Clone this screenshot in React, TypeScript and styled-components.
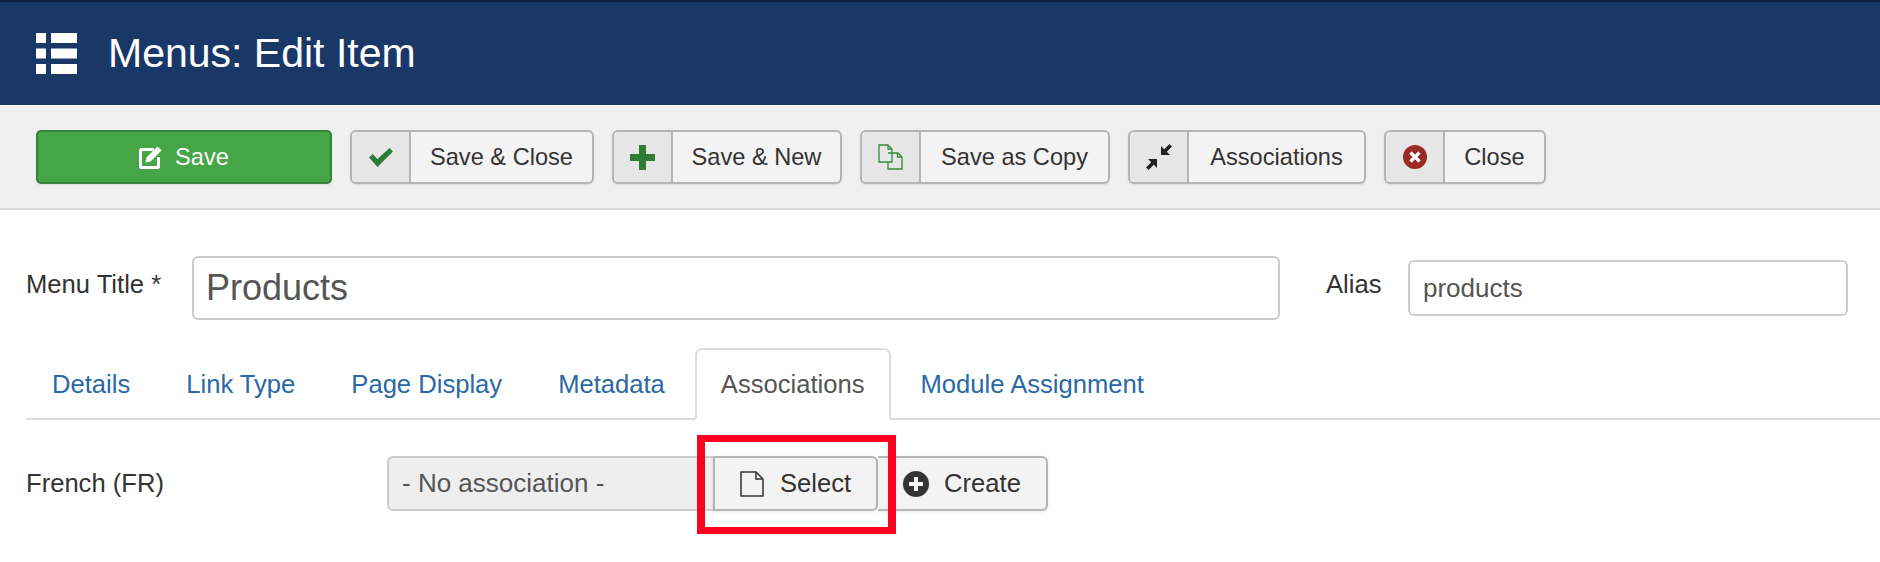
import React from "react";
import styled, { createGlobalStyle } from "styled-components";

const GlobalStyle = createGlobalStyle`
  html, body {
    margin: 0;
    padding: 0;
    background: #ffffff;
    font-family: "Liberation Sans", Arial, sans-serif;
    color: #333333;
  }
`;

const Page = styled.div`
  width: 1880px;
  height: 562px;
  overflow: hidden;
  position: relative;
  background: #fff;
`;

const Header = styled.header`
  height: 103px;
  box-sizing: content-box;
  background: #1a3867;
  border-top: 2px solid #0c1e3e;
  display: flex;
  align-items: center;
  padding-left: 36px;
  gap: 31px;
  color: #fff;
`;

const Title = styled.h1`
  margin: 0;
  font-size: 41px;
  font-weight: 400;
  line-height: 1;
`;

const Toolbar = styled.div`
  height: 102px;
  background: #f0f0f0;
  border-bottom: 2px solid #dddddd;
  display: flex;
  align-items: center;
  padding-left: 36px;
  gap: 18px;
  margin-top: 1px;
`;

const SaveButton = styled.div`
  width: 296px;
  height: 54px;
  box-sizing: border-box;
  background: #46a546;
  border: 2px solid #35843a;
  border-radius: 5px;
  box-shadow: 0 1px 2px rgba(0, 0, 0, 0.1);
  color: #fff;
  font-size: 23.6px;
  display: flex;
  align-items: center;
  justify-content: center;
  gap: 12px;
`;

const ToolButton = styled.div<{ $w: number }>`
  width: ${(p) => p.$w}px;
  height: 54px;
  box-sizing: border-box;
  background: #f3f3f3;
  border: 2px solid #b5b5b5;
  border-radius: 6px;
  box-shadow: 0 1px 2px rgba(0, 0, 0, 0.1);
  font-size: 23.6px;
  color: #333;
  display: flex;
  overflow: hidden;
`;

const IconCell = styled.span`
  width: 57px;
  flex: none;
  background: #e6e6e6;
  border-right: 2px solid #b5b5b5;
  display: flex;
  align-items: center;
  justify-content: center;
`;

const ToolLabel = styled.span`
  flex: 1;
  display: flex;
  align-items: center;
  justify-content: center;
`;

const Main = styled.main`
  padding-left: 26px;
`;

const TitleRow = styled.div`
  display: flex;
  align-items: flex-start;
  padding: 46px 32px 0 0;
`;

const FieldLabel = styled.label<{ $w: number }>`
  width: ${(p) => p.$w}px;
  flex: none;
  font-size: 25.6px;
  line-height: 30px;
  padding-top: 13px;
  color: #333;
`;

const TitleField = styled.div`
  width: 1088px;
  height: 64px;
  box-sizing: border-box;
  flex: none;
  border: 2px solid #cccccc;
  border-radius: 6px;
  padding-left: 12px;
  font-size: 36px;
  line-height: 60px;
  color: #555;
  margin-right: 46px;
`;

const AliasField = styled.div`
  width: 440px;
  height: 56px;
  box-sizing: border-box;
  flex: none;
  margin-top: 4px;
  border: 2px solid #cccccc;
  border-radius: 6px;
  padding-left: 13px;
  font-size: 26px;
  line-height: 52px;
  color: #555;
`;

const Tabs = styled.nav`
  display: flex;
  gap: 4px;
  margin-top: 28px;
  height: 72px;
  box-sizing: border-box;
  border-bottom: 2px solid #dddddd;
`;

const Tab = styled.a<{ $active?: boolean }>`
  height: 72px;
  box-sizing: border-box;
  padding: 0 24px;
  font-size: 25.6px;
  line-height: 68px;
  color: ${(p) => (p.$active ? "#555555" : "#2a69a6")};
  border: 2px solid ${(p) => (p.$active ? "#dddddd" : "transparent")};
  border-bottom-color: ${(p) => (p.$active ? "#ffffff" : "transparent")};
  border-radius: 7px 7px 0 0;
  background: ${(p) => (p.$active ? "#ffffff" : "transparent")};
`;

const AssocRow = styled.div`
  display: flex;
  align-items: center;
  margin-top: 36px;
`;

const AssocLabel = styled.label`
  width: 361px;
  flex: none;
  font-size: 25.6px;
  color: #333;
`;

const Group = styled.div`
  display: flex;
  height: 55px;
`;

const NoAssoc = styled.div`
  width: 326px;
  box-sizing: border-box;
  background: #eeeeee;
  border: 2px solid #cccccc;
  border-right: none;
  border-radius: 6px 0 0 6px;
  padding-left: 13px;
  font-size: 26px;
  line-height: 50px;
  color: #555;
`;

const GroupButton = styled.div<{ $w: number; $last?: boolean }>`
  width: ${(p) => p.$w}px;
  box-sizing: border-box;
  background: #f3f3f3;
  border: 2px solid #b5b5b5;
  border-left: ${(p) => (p.$last ? "none" : "2px solid #b5b5b5")};
  border-radius: ${(p) => (p.$last ? "0 6px 6px 0" : "0 6px 6px 0")};
  box-shadow: 0 1px 3px rgba(0, 0, 0, 0.1);
  font-size: 25.6px;
  color: #333;
  display: flex;
  align-items: center;
  justify-content: center;
  gap: ${(p) => (p.$last ? 15 : 16)}px;
`;

const Highlight = styled.div`
  position: absolute;
  left: 697px;
  top: 435px;
  width: 199px;
  height: 99px;
  box-sizing: border-box;
  border-style: solid;
  border-color: #ff0020;
  border-width: 7px 8px;
  pointer-events: none;
`;

const ListIcon = () => (
  <svg width="41" height="41" viewBox="0 0 41 41" fill="#fff">
    <rect x="0" y="0" width="10" height="10" />
    <rect x="15" y="0" width="26" height="10" />
    <rect x="0" y="15.500" width="10" height="10" />
    <rect x="15" y="15.500" width="26" height="10" />
    <rect x="0" y="31" width="10" height="10" />
    <rect x="15" y="31" width="26" height="10" />
  </svg>
);

const EditIcon = () => (
  <svg width="24" height="24" viewBox="0 0 24 24" fill="none">
    <path d="M15 4.500H2.500a1 1 0 0 0-1 1V21.500a1 1 0 0 0 1 1H18.500a1 1 0 0 0 1-1V12" stroke="#fff" strokeWidth="3" />
    <path d="M7.500 12.500 18.500 1.500l4 4L11.500 16.500l-5 1z" fill="#fff" />
  </svg>
);

const CheckIcon = () => (
  <svg width="24" height="19" viewBox="0 0 24 19">
    <path d="M0 9.500 3.500 6l5 5L20.500 0 24 3.500 8.500 19z" fill="#2f7d32" />
  </svg>
);

const PlusIcon = () => (
  <svg width="25" height="25" viewBox="0 0 25 25">
    <path d="M9 0h7v9h9v7h-9v9H9v-9H0V9h9z" fill="#2f7d32" />
  </svg>
);

const CopyIcon = () => (
  <svg width="25" height="26" viewBox="0 0 25 26" fill="none" stroke="#378a3c" strokeWidth="1.300">
    <path d="M1 1h9l4 4v13H1z" />
    <path d="M10 1v4h4" />
    <path d="M10 9h10l4 4v12H10v-7" />
    <path d="M19.500 9v4H24" />
  </svg>
);

const ContractIcon = () => (
  <svg width="26" height="26" viewBox="0 0 26 26" fill="#222">
    <path d="M15 2v9h9l-3.200-3.200L26 2.600 23.400 0l-5.200 5.200z" />
    <path d="M11 24v-9H2l3.200 3.200L0 23.400 2.600 26l5.200-5.200z" />
  </svg>
);

const CancelIcon = () => (
  <svg width="24" height="24" viewBox="0 0 24 24">
    <circle cx="12" cy="12" r="12" fill="#9c2a24" />
    <path d="M7.500 7.500l9 9M16.500 7.500l-9 9" stroke="#fff" strokeWidth="3.200" />
  </svg>
);

const FileIcon = () => (
  <svg width="24" height="26" viewBox="0 0 24 26" fill="none" stroke="#333" strokeWidth="1.500">
    <path d="M1 1h15l7 7v17H1z" />
    <path d="M16 1v7h7" />
  </svg>
);

const PlusCircleIcon = () => (
  <svg width="26" height="26" viewBox="0 0 26 26">
    <circle cx="13" cy="13" r="13" fill="#333" />
    <path d="M11 6h4v5h5v4h-5v5h-4v-5H6v-4h5z" fill="#f3f3f3" />
  </svg>
);

const tools = [
  { label: "Save & Close", w: 244, icon: <CheckIcon /> },
  { label: "Save & New", w: 230, icon: <PlusIcon /> },
  { label: "Save as Copy", w: 250, icon: <CopyIcon /> },
  { label: "Associations", w: 238, icon: <ContractIcon /> },
  { label: "Close", w: 162, icon: <CancelIcon /> },
];

const tabs = ["Details", "Link Type", "Page Display", "Metadata", "Associations", "Module Assignment"];

export default function App() {
  return (
    <Page>
      <GlobalStyle />
      <Header>
        <ListIcon />
        <Title>Menus: Edit Item</Title>
      </Header>
      <Toolbar>
        <SaveButton>
          <EditIcon />
          Save
        </SaveButton>
        {tools.map((t) => (
          <ToolButton key={t.label} $w={t.w}>
            <IconCell>{t.icon}</IconCell>
            <ToolLabel>{t.label}</ToolLabel>
          </ToolButton>
        ))}
      </Toolbar>
      <Main>
        <TitleRow>
          <FieldLabel $w={166}>Menu Title *</FieldLabel>
          <TitleField>Products</TitleField>
          <FieldLabel $w={82}>Alias</FieldLabel>
          <AliasField>products</AliasField>
        </TitleRow>
        <Tabs>
          {tabs.map((t) => (
            <Tab key={t} $active={t === "Associations"}>
              {t}
            </Tab>
          ))}
        </Tabs>
        <AssocRow>
          <AssocLabel>French (FR)</AssocLabel>
          <Group>
            <NoAssoc>- No association -</NoAssoc>
            <GroupButton $w={165}>
              <FileIcon />
              Select
            </GroupButton>
            <GroupButton $w={170} $last>
              <PlusCircleIcon />
              Create
            </GroupButton>
          </Group>
        </AssocRow>
      </Main>
      <Highlight />
    </Page>
  );
}
